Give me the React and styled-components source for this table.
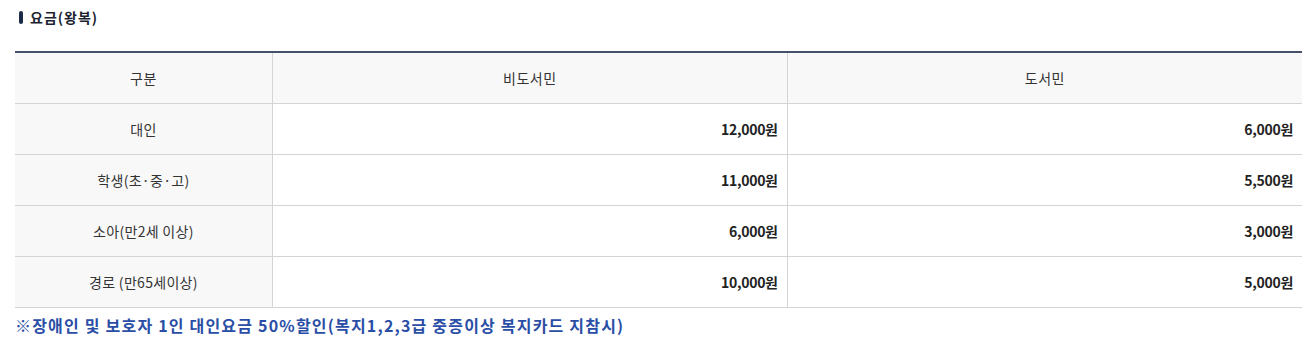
import React from "react";
import styled, { createGlobalStyle } from "styled-components";

const GlobalStyle = createGlobalStyle`
    body {
        margin: 0;
        background: #fff;
        font-family: "Noto Sans CJK KR", "Noto Sans", sans-serif;
    }
`;

const FareSectionStyles = styled.section`
    padding: 7px 0 0 15px;
`;

const Title = styled.h4`
    display: flex;
    align-items: center;
    gap: 7px;
    margin: 0 0 24px 4px;
    font-size: 14px;
    font-weight: 700;
    color: #1c2330;
    line-height: 20px;
    letter-spacing: 1px;
    &::before {
        content: "";
        width: 4px;
        height: 13px;
        border-radius: 2px;
        background: #1b2a48;
    }
`;

const FareTable = styled.table`
    width: 100%;
    border-collapse: collapse;
    table-layout: fixed;
    border-top: 2px solid #465068;
    font-size: 14px;
    color: #333;
`;

const Cell = styled.td`
    height: 50px;
    padding: 0 9px;
    border-bottom: 1px solid #d4d4d4;
    border-left: 1px solid #d4d4d4;
    text-align: ${(props) => (props.$num ? "right" : "center")};
    font-weight: ${(props) => (props.$num ? 700 : 400)};
    background: ${(props) => (props.$gray ? "#f8f8f8" : "#fff")};
    color: ${(props) => (props.$num ? "#222" : "#333")};
    letter-spacing: ${(props) => (props.$num ? "-0.3px" : "0.3px")};
    &:first-child {
        border-left: none;
    }
`;

const HeadCell = styled.th`
    height: 50px;
    padding: 0;
    font-weight: 400;
    letter-spacing: 0.5px;
    background: #f8f8f8;
    border-bottom: 1px solid #d4d4d4;
    border-left: 1px solid #d4d4d4;
    &:first-child {
        border-left: none;
    }
`;

const Notice = styled.p`
    margin: 5px 0 0;
    font-size: 16px;
    font-weight: 700;
    color: #2a4ea6;
    letter-spacing: 1.2px;
`;

const fares = [
    { label: "대인", resident: "12,000원", local: "6,000원" },
    { label: "학생(초·중·고)", resident: "11,000원", local: "5,500원" },
    { label: "소아(만2세 이상)", resident: "6,000원", local: "3,000원" },
    { label: "경로 (만65세이상)", resident: "10,000원", local: "5,000원" },
];

const App = () => {
    return (
        <FareSectionStyles>
            <GlobalStyle />
            <Title>요금(왕복)</Title>
            <FareTable>
                <colgroup>
                    <col style={{ width: "20%" }} />
                    <col style={{ width: "40%" }} />
                    <col style={{ width: "40%" }} />
                </colgroup>
                <thead>
                    <tr>
                        <HeadCell>구분</HeadCell>
                        <HeadCell>비도서민</HeadCell>
                        <HeadCell>도서민</HeadCell>
                    </tr>
                </thead>
                <tbody>
                    {fares.map((item) => (
                        <tr key={item.label}>
                            <Cell $gray>{item.label}</Cell>
                            <Cell $num>{item.resident}</Cell>
                            <Cell $num>{item.local}</Cell>
                        </tr>
                    ))}
                </tbody>
            </FareTable>
            <Notice>
                ※장애인 및 보호자 1인 대인요금 50%할인(복지1,2,3급 중증이상 복지카드 지참시)
            </Notice>
        </FareSectionStyles>
    );
};

export default App;
